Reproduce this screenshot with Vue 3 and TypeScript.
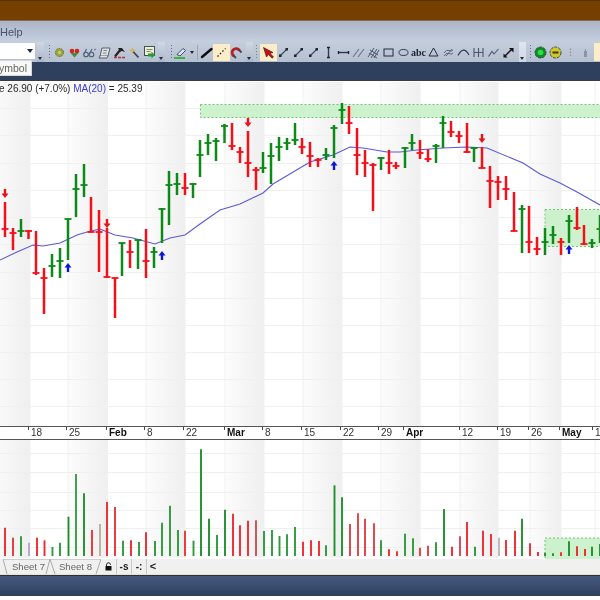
<script setup lang="ts">
type Bar = [number, number, number, number, 'g' | 'r']
const colorOf = { g: '#0c8a18', r: '#f4101a' }

const bars: Bar[] = [
  [5,202,237,229,'r'],[13,228,250,233,'r'],[21,219,237,231,'g'],[28.5,230,239,231,'r'],[36,231,275,273,'r'],
  [44,268,314,278,'r'],[52,254,277,266,'g'],[60,248,278,261,'g'],[68,219,260,219,'g'],[76,174,217,189,'g'],
  [84,164,197,185,'g'],[91,197,232,232,'r'],[99,210,272,232,'r'],[107,228,278,277,'r'],[115,278,318,278,'r'],
  [122,243,276,243,'g'],[130,240,268,252,'r'],[138,239,269,240,'g'],[146,229,278,261,'r'],[154,247,268,252,'g'],
  [162,208,243,209,'g'],[169,171,225,185,'g'],[177,173,195,184,'g'],[185,173,195,188,'r'],[193,183,198,184,'g'],
  [200,140,177,155,'g'],[208,134,155,143,'g'],[216,138,161,141,'g'],[224.5,124,143,126,'g'],[232,123,150,146,'r'],
  [240,147,163,152,'r'],[248,131,177,163,'r'],[256,167,190,170,'r'],[263,152,173,168,'g'],[271,143,184,156,'g'],
  [279,137,161,147,'g'],[287,138,150,143,'g'],[295,123,145,140,'g'],[302,138,154,147,'r'],[310,142,167,156,'r'],
  [318,158,167,160,'r'],[326,148,160,155,'g'],[334,125,158,128,'g'],[342,103,124,110,'g'],[349,106,134,123,'r'],
  [357,128,175,155,'r'],[365,150,177,163,'r'],[373,163,211,165,'r'],[381,157,170,158,'g'],[389,150,174,163,'r'],
  [396,162,169,166,'r'],[405,147,168,148,'g'],[412,134,150,143,'g'],[420,140,159,153,'r'],[428,149,162,159,'r'],
  [436,144,163,146,'g'],[443,116,148,123,'g'],[451,121,137,132,'r'],[459,131,143,136,'r'],[467,123,153,152,'r'],
  [474,147,162,148,'g'],[482,147,168,168,'r'],[490,166,208,181,'r'],[498,176,200,182,'r'],[506,176,200,189,'r'],
  [514,192,231,231,'r'],[522,205,253,209,'g'],[529,206,253,242,'r'],[537,237,255,249,'r'],[545,228,255,242,'g'],
  [553,226,244,235,'g'],[561,238,255,242,'r'],[569,215,243,221,'g'],[577,207,230,228,'r'],[584,225,245,244,'r'],
  [592,239,248,243,'g'],[600,215,243,229,'g'],
]

const vol: [number, number, string][] = [
  [5,323,'#ee2a30'],[13,353,'#e8343a'],[21,349,'#2c9a3a'],[29,368,'#b5a8c8'],[37,353,'#ee2a30'],[44.5,361,'#ee2a30'],
  [52.5,381,'#2c9a3a'],[60,368,'#2c9a3a'],[68.5,290,'#1f8f2e'],[76,162,'#3a9a48'],[84,220,'#1f8f2e'],[92,330,'#e8343a'],
  [100,312,'#b8aea0'],[107,246,'#ee2a30'],[115,261,'#e8343a'],[123,362,'#2c9a3a'],[131,361,'#ee2a30'],[139,366,'#2c9a3a'],
  [146,337,'#ee2a30'],[155,363,'#2c9a3a'],[162,308,'#2c9a3a'],[170,257,'#2c9a3a'],[178,330,'#2c9a3a'],[185,332,'#e8343a'],
  [193.5,362,'#2c9a3a'],[201,88,'#1f8f2e'],[209,296,'#1f8f2e'],[217,345,'#2c9a3a'],[225,269,'#1f8f2e'],[233,281,'#ee2a30'],
  [240,316,'#ee2a30'],[248,302,'#ee2a30'],[256,301,'#c85058'],[264,333,'#2c9a3a'],[272,330,'#2c9a3a'],[279.5,348,'#2c9a3a'],
  [287,343,'#2c9a3a'],[295,321,'#2c9a3a'],[303,365,'#ee2a30'],[311,361,'#ee2a30'],[319,363,'#ee2a30'],[326,376,'#2c9a3a'],
  [334.5,196,'#1f8f2e'],[342,232,'#1f8f2e'],[350,312,'#e04048'],[358,280,'#e04048'],[365,296,'#e04048'],[374,310,'#e04048'],
  [381,361,'#2c9a3a'],[389,388,'#ee2a30'],[397,394,'#ee2a30'],[405,341,'#2c9a3a'],[413,355,'#2c9a3a'],[420,383,'#e04048'],
  [428,377,'#e04048'],[436,367,'#2c9a3a'],[444,267,'#1f8f2e'],[452,380,'#ee2a30'],[460,349,'#d04860'],[467,306,'#ee2a30'],
  [475,380,'#2c9a3a'],[483,332,'#ee2a30'],[491,342,'#ee2a30'],[499,353,'#b8b8b8'],[506,360,'#ee2a30'],[515,332,'#ee2a30'],
  [522,296,'#1f8f2e'],[530,370,'#ee2a30'],[538,396,'#ee2a30'],[545,398,'#1f8f2e'],[553,400,'#1f8f2e'],[561,397,'#ee2a30'],
  [569,364,'#1f8f2e'],[577,379,'#ee2a30'],[585,387,'#ee2a30'],[592,380,'#1f8f2e'],[600,372,'#1f8f2e'],
]
const volBars = vol.map(([x, z, c]) => ({ x, top: 420 + z / 3, c }))

const bands = [
  [-10, 40], [68, 40], [146, 39], [225, 39], [303, 39], [381, 39], [460, 38], [530, 31],
]
const hGrid = [108, 135, 163, 190, 217, 244, 272, 298, 325, 352, 379, 406, 453, 472, 492, 510, 528, 547]
const vGrid = [30, 68, 107, 146, 185, 225, 264, 303, 342, 381, 420, 460, 498, 530, 561, 595]

const maPts = '0,260 17,252 33,245 43,246 60,243 77,235 87,232 100,229 115,235 133,238 155,244 170,238 185,235 200,224 220,210 240,204 263,193 273,184 310,162 333,155 350,147 363,148 387,152 400,152 417,150 443,148 467,147 487,148 523,163 540,174 560,183 577,192 600,205'

const arrowsDown = [[5, 189], [107, 219], [248, 118], [482, 134]]
const arrowsUp = [[68, 263], [162, 251], [334, 161], [569, 245]]

const labels: [number, string, boolean][] = [
  [31,'18',false],[69,'25',false],[109,'Feb',true],[147,'8',false],[186,'22',false],[227,'Mar',true],[265,'8',false],
  [304,'15',false],[343,'22',false],[381,'29',false],[406,'Apr',true],[462,'12',false],[500,'19',false],[531,'26',false],
  [562,'May',true],[595,'1',false],
]
</script>

<template>
  <div class="app">
    <div class="title"></div>
    <div class="menu"><span class="menu-item">Help</span></div>
    <div class="toolbar">
      <div class="combo"><span class="combo-arrow"></span></div>
      <span class="chev"></span>
      <span class="grip first"></span>
      <svg class="ic" viewBox="0 0 15 15"><circle cx="7.500" cy="7.500" r="4" fill="#9aa640" stroke="#5c6a20" stroke-dasharray="1.500 1"/><circle cx="7.500" cy="7.500" r="1.500" fill="#d8c870"/></svg>
      <svg class="ic" viewBox="0 0 15 15"><circle cx="5" cy="6" r="2.300" fill="#d8201c"/><circle cx="10" cy="6" r="2.300" fill="#d8201c"/><path d="M3.500 8l4 4.500L12 7.500z" fill="#4a8a3a"/></svg>
      <svg class="ic" viewBox="0 0 15 15" fill="none" stroke="#4a6078" stroke-width="1.100"><circle cx="4" cy="9.500" r="2.300"/><circle cx="9.500" cy="9.500" r="2.300"/><path d="M2 9l2.500-5M7.500 9l2.500-5M12.500 5l1-1"/></svg>
      <svg class="ic" viewBox="0 0 15 15" fill="#dfe2e2" stroke="#4c5460" stroke-width=".9"><path d="M5 3h8l-2 8H3z"/><path d="M3 11l-1 2h8l1-2"/><path d="M6.500 5.500h3.500M6 8h3.500" stroke-width=".7"/></svg>
      <svg class="ic" viewBox="0 0 15 15"><path d="M3 11.500l5.500-7" stroke="#222" stroke-width="2.100"/><path d="M6 3h4l3 4-3-1-2 .8z" fill="#222"/><path d="M2 12.500h11" stroke="#b83040" stroke-width="1.400" stroke-dasharray="3 1"/></svg>
      <svg class="ic" viewBox="0 0 15 15"><path d="M6 6.500l5.500 6" stroke="#3c4450" stroke-width="1.800"/><path d="M5.500 2l.9 2.600 2.600.9-2.600.9-.9 2.600-.9-2.600L2 5.500l2.600-.9z" fill="#cdb850"/></svg>
      <svg class="ic" viewBox="0 0 15 15"><rect x="2.500" y="1.500" width="10" height="9" fill="#eef0d8" stroke="#405058"/><path d="M4.500 4.500h6M4.500 6.500h4" stroke="#7a8a60"/><path d="M6 8.500h3.500V6.500l3.500 3.500-3.500 3.500V11.500H6z" fill="#2c9a3a"/></svg>
      <span class="chev w2"></span>
      <span class="grip second"></span>
      <svg class="ic wide" viewBox="0 0 18 15"><path d="M5 9.500l6-6 2.500 2-5.500 5.500z" fill="#dfe6f2" stroke="#3a4a70"/><path d="M2 13h11" stroke="#38b838" stroke-width="2"/></svg>
      <span class="mini-arrow"></span>
      <span class="sep"></span>
      <svg class="ic" viewBox="0 0 15 15"><path d="M3 12l9.500-8" stroke="#0c0c0c" stroke-width="2.400" stroke-linecap="round"/></svg>
      <svg class="ic hl" viewBox="0 0 15 15"><path d="M3.500 11.500l8-8" stroke="#222" stroke-dasharray="1.500 2" stroke-width="1.300"/></svg>
      <svg class="ic" viewBox="0 0 15 15" fill="none"><path d="M5 11A4 4 0 1 1 10.500 5.500" stroke="#b82028" stroke-width="2.800"/><path d="M4.500 10.500l2.500 2.500M10 5l2.500 2.500" stroke="#444" stroke-width="1.800"/></svg>
      <span class="chev w2"></span>
      <span class="grip tint"></span>
      <svg class="ic hl" viewBox="0 0 15 15"><path d="M2.500 2.500l9.500 5-3 .8 3.500 3.700-1.500 1.200L7.500 9.500l-2 2.500z" fill="#c8101c" stroke="#30100c" stroke-width=".6"/></svg>
      <svg class="ic" viewBox="0 0 15 15" v-for="n in 3" :key="n"><path d="M4.500 10.500l6-6" stroke="#3c4858" stroke-width="1.100"/><rect x="3" y="9.500" width="2.500" height="2.500" fill="#1c2430"/><rect x="9.500" y="3" width="2.500" height="2.500" fill="#1c2430"/></svg>
      <svg class="ic" viewBox="0 0 15 15"><path d="M7.500 2v11" stroke="#2c3848" stroke-width="1.400"/><path d="M6 2.500h3M6 12.500h3" stroke="#1c2430" stroke-width="1.500"/></svg>
      <svg class="ic" viewBox="0 0 15 15"><path d="M2 7.500h11" stroke="#2c3848" stroke-width="1.400"/><path d="M2.500 6v3M12.500 6v3" stroke="#1c2430" stroke-width="1.400"/></svg>
      <svg class="ic" viewBox="0 0 15 15" stroke="#68748a" stroke-width="1.100"><path d="M2 12l6-8M7 12l6-8"/></svg>
      <svg class="ic" viewBox="0 0 15 15" stroke="#4c5868" stroke-width="1"><path d="M2 12l6-9M5 13l6-9M8 13l5-8M4 5l8 5M3 8l8 5"/></svg>
      <svg class="ic" viewBox="0 0 15 15"><rect x="3" y="4" width="9" height="7" fill="none" stroke="#222c3c" stroke-width="1"/></svg>
      <svg class="ic" viewBox="0 0 15 15"><ellipse cx="7.500" cy="7.500" rx="4.500" ry="3" fill="none" stroke="#2c3848" stroke-width="1"/></svg>
      <span class="ic abc">abc</span>
      <svg class="ic" viewBox="0 0 15 15"><path d="M7.500 3l4.500 8H3z" fill="none" stroke="#222c3c" stroke-width="1"/></svg>
      <svg class="ic" viewBox="0 0 15 15" fill="none" stroke="#5c6878" stroke-width="1"><path d="M3 8q2.500-4 5-2.500T12 5M3 11q2.500-4 5-2.500t4-.5M5 11l6-7"/></svg>
      <svg class="ic" viewBox="0 0 15 15"><path d="M2 10.500Q7.500 0 13 10" fill="none" stroke="#2c3848" stroke-width="1.100"/></svg>
      <svg class="ic" viewBox="0 0 15 15" stroke="#4c5868" stroke-width="1.100"><path d="M3 3v9M7.500 3v9M12 3v9M3 7.500h9"/></svg>
      <svg class="ic" viewBox="0 0 15 15"><path d="M2.500 11.500l3.500-5 2 2.500 4.500-5" fill="none" stroke="#4c5868" stroke-width="1.100"/></svg>
      <svg class="ic" viewBox="0 0 15 15"><path d="M4 11l7-7" stroke="#111" stroke-width="1.500"/><path d="M8 3h4.500v4.500zM2.500 8.500l4 4h-4z" fill="#111"/></svg>
      <span class="chev w2 light"></span>
      <span class="grip last"></span>
      <svg class="ic" viewBox="0 0 15 15"><circle cx="7.500" cy="7.500" r="5.500" fill="#0c8a28" stroke="#404848" stroke-dasharray="3 1"/><circle cx="7.500" cy="7.500" r="2.800" fill="#28e040"/></svg>
      <svg class="ic" viewBox="0 0 15 15"><circle cx="7.500" cy="7.500" r="5.500" fill="#d0c828" stroke="#404848" stroke-dasharray="3 1"/><rect x="4.500" y="6.500" width="6" height="2" fill="#403c10"/></svg>
      <svg class="ic" viewBox="0 0 15 15"><path d="M7.500 3.500V5M7.500 6.500V8M7.500 9.500V11" stroke="#8a94a0" stroke-width="1.200"/></svg>
      <svg class="ic" viewBox="0 0 15 15"><path d="M6 12V6h1V4h1v2h1v6z" fill="#8a94a4"/></svg>
      <span class="hl-end"></span>
    </div>
    <div class="navy">
      <div class="tooltip">ymbol</div>
    </div>
    <svg class="chart" viewBox="0 81 600 478" preserveAspectRatio="none">
      <defs>
        <linearGradient id="band" x1="0" x2="1" y1="0" y2="0">
          <stop offset="0" stop-color="#fcfcfc"/>
          <stop offset="1" stop-color="#efefef"/>
        </linearGradient>
      </defs>
      <rect x="0" y="81" width="600" height="478" fill="#fff"/>
      <rect v-for="b in bands" :key="b[0]" :x="b[0]" y="82" :width="b[1]" height="344" fill="url(#band)"/>
      <rect v-for="b in bands" :key="'v' + b[0]" :x="b[0]" y="440" :width="b[1]" height="118" fill="url(#band)"/>
      <g stroke="#f0f0f0">
        <line v-for="y in hGrid" :key="y" x1="0" x2="600" :y1="y + 0.5" :y2="y + 0.5"/>
        <template v-for="x in vGrid" :key="x">
          <line :x1="x" :x2="x" y1="82" y2="426"/>
          <line :x1="x" :x2="x" y1="440" y2="558"/>
        </template>
      </g>

      <rect class="zone" x="200.500" y="104.500" width="410" height="13"/>
      <rect class="zone" x="545" y="209.500" width="70" height="37"/>
      <rect class="zone" x="545" y="538" width="70" height="30"/>

      <polyline :points="maPts" fill="none" stroke="#5a5ad8" stroke-width="1.100"/>

      <g v-for="(b, i) in bars" :key="i" :stroke="colorOf[b[4]]">
        <line :x1="b[0]" :x2="b[0]" :y1="b[1]" :y2="b[2]" stroke-width="2.500"/>
        <line :x1="b[0] - 3.500" :x2="b[0] + 3.500" :y1="b[3]" :y2="b[3]" stroke-width="1.800"/>
      </g>

      <path v-for="a in arrowsDown" :key="a[0]" :d="`M${a[0] - 1.200} ${a[1]}h2.400v4.500h2.300l-3.500 4.500-3.500-4.500h2.300z`" fill="#ee1018"/>
      <path v-for="a in arrowsUp" :key="a[0]" :d="`M${a[0] - 1.200} ${a[1] + 9}h2.400v-4.500h2.300l-3.500-4.500-3.500 4.500h2.300z`" fill="#0c18d8"/>

      <text class="legend" x="-1" y="92">e 26.90 (+7.0%) <tspan fill="#3a3ad0">MA(20)</tspan> = 25.39</text>

      <rect x="0" y="426" width="600" height="14" fill="#fff"/>
      <line x1="0" x2="600" y1="426.500" y2="426.500" stroke="#555" />
      <line x1="0" x2="600" y1="439.500" y2="439.500" stroke="#555" />
      <template v-for="l in labels" :key="l[0]">
        <line :x1="l[0] - 2.500" :x2="l[0] - 2.500" y1="427" y2="430" stroke="#444"/>
        <text :class="['axis', { bold: l[2] }]" :x="l[0]" y="436">{{ l[1] }}</text>
      </template>

      <line v-for="(v, i) in volBars" :key="i" :x1="v.x" :x2="v.x" :y1="v.top" y2="556" :stroke="v.c" stroke-width="1.900"/>
    </svg>
    <div class="tabs">
      <div class="tab first">
        <svg class="tab-edge" viewBox="0 0 47 15" preserveAspectRatio="none"><path d="M0 0h47l-4 15M0 0l4 15" fill="none" stroke="#aaa"/></svg>
        Sheet 7
      </div>
      <div class="tab second">
        <svg class="tab-edge" viewBox="0 0 51 15" preserveAspectRatio="none"><path d="M0 0h51l-5 15M0 0l5 15" fill="none" stroke="#aaa"/></svg>
        Sheet 8
      </div>
      <div class="tool-btn lock">
        <svg width="9" height="9" viewBox="0 0 9 9"><path d="M2.500 4V2.800a2 2 0 0 1 4 0" fill="none" stroke="#222"/><rect x="1.500" y="4" width="6" height="4.500" fill="#111"/></svg>
      </div>
      <div class="tool-btn"><span class="btn-text">-s</span></div>
      <div class="tool-btn"><span class="btn-text">-:</span></div>
      <div class="tool-btn last"><span class="btn-text big">&lt;</span></div>
    </div>
    <div class="status"></div>
  </div>
</template>

<style>
html, body { margin: 0; background: #fff; }
</style>

<style scoped>
.app {
  width: 600px;
  height: 600px;
  overflow: hidden;
  display: flex;
  flex-direction: column;
  font-family: "Liberation Sans", Arial, sans-serif;
}
.title {
  height: 21px;
  flex: none;
  box-sizing: border-box;
  border-top: 1px solid #5a3000;
  border-bottom: 1px solid #8a6a4a;
  background: #743f00;
}
.menu {
  height: 21px;
  flex: none;
  background: linear-gradient(#a9b5c8, #c6cfde);
  display: flex;
  align-items: center;
}
.menu-item { font-size: 11px; color: #46546c; filter: blur(0.3px); }
.toolbar {
  height: 20px;
  flex: none;
  background: linear-gradient(#c4cddc, #b4bfd0);
  display: flex;
  align-items: center;
  filter: blur(0.35px);
}
.combo {
  width: 35px;
  height: 16px;
  margin-right: 2px;
  margin-bottom: 3px;
  flex: none;
  background: #fff;
  box-sizing: border-box;
  display: flex;
  align-items: center;
  justify-content: flex-end;
  padding-right: 2px;
}
.combo-arrow {
  border-left: 3.500px solid transparent;
  border-right: 3.500px solid transparent;
  border-top: 4px solid #1c2a40;
}
.chev {
  width: 7px;
  height: 20px;
  flex: none;
  background: linear-gradient(#d0d8e4, #aab6c8);
  position: relative;
}
.chev::after {
  content: "";
  position: absolute;
  left: 1px;
  bottom: 2px;
  border-left: 2.500px solid transparent;
  border-right: 2.500px solid transparent;
  border-top: 3px solid #202c40;
}
.chev.w2 { margin-left: 1.500px; }
.chev.light { background: linear-gradient(#e0e6ef, #cfd7e4); margin-left: 3px; }
.grip {
  width: 1px;
  height: 14px;
  flex: none;
  background: repeating-linear-gradient(#5c6c88 0 1px, transparent 1px 3px);
}
.grip.first { margin: 0 1.500px 0 5px; }
.grip.second { margin: 0 0 0 5.500px; }
.grip.tint { background: repeating-linear-gradient(#48a060 0 1px, transparent 1px 3px); margin: 0 4.500px 0 3px; }
.grip.last { margin: 0 1.500px 0 4px; }
.ic {
  width: 15px;
  height: 15px;
  flex: none;
  display: block;
}
.ic.wide { width: 18px; }
.ic.hl { background: #fcedc8; box-shadow: 0 0 0 1px #fcedc8; }
.abc {
  font-family: "Liberation Serif", serif;
  font-weight: 700;
  font-size: 10px;
  line-height: 15px;
  text-align: center;
  color: #1c2430;
}
.mini-arrow {
  flex: none;
  border-left: 2.500px solid transparent;
  border-right: 2.500px solid transparent;
  border-top: 3px solid #1c2430;
}
.sep {
  width: 1px;
  height: 15px;
  flex: none;
  margin: 0 1.500px 0 3px;
  background: #9aa6b8;
}
.hl-end {
  flex: 1;
  height: 18px;
  margin-left: 1px;
  background: #fcedc8;
}
.navy {
  height: 18px;
  flex: none;
  background: #2e405e;
  border-bottom: 1px solid #3c3c3c;
  position: relative;
}
.tooltip {
  position: absolute;
  left: -10px;
  top: -2px;
  width: 42px;
  height: 16px;
  box-sizing: border-box;
  padding-left: 8px;
  background: #f8f8f8;
  border: 1px solid #d8d8d8;
  color: #666;
  font-size: 10.500px;
  line-height: 14px;
  text-align: left;
  filter: blur(0.3px);
}
.chart {
  width: 600px;
  height: 478px;
  flex: none;
  display: block;
  filter: blur(0.3px);
}
.zone {
  fill: #c9f1c9;
  fill-opacity: 0.9;
  stroke: #74c574;
  stroke-dasharray: 2 2;
}
.legend {
  font-size: 10px;
  fill: #2a2a2a;
}
.axis {
  font-size: 10px;
  fill: #333;
}
.axis.bold { font-weight: 700; fill: #111; }
.tabs {
  height: 15px;
  flex: none;
  background: #f0f0f0;
  border-bottom: 1px solid #e8e4c8;
  display: flex;
  align-items: stretch;
  padding-left: 3px;
  filter: blur(0.3px);
}
.tab {
  flex: none;
  font-size: 9.600px;
  line-height: 15px;
  text-align: center;
  color: #666;
  position: relative;
}
.tab.first { width: 47px; padding-left: 4px; box-sizing: border-box; }
.tab.second { width: 51px; }
.tab-edge {
  position: absolute;
  inset: 0;
  width: 100%;
  height: 100%;
}
.tool-btn {
  width: 15px;
  flex: none;
  box-sizing: border-box;
  border-right: 1px solid #c8c8c8;
  display: flex;
  align-items: center;
  justify-content: center;
}
.tool-btn.lock { width: 16px; }
.tool-btn.last { border-right: 0; width: 12px; }
.btn-text { font-size: 10px; line-height: 1; color: #222; font-weight: 700; }
.btn-text.big { font-size: 11px; }
.status {
  height: 20px;
  flex: none;
  background: linear-gradient(#46587e, #2f405f);
  border-top: 1px solid #2a3040;
}
</style>
